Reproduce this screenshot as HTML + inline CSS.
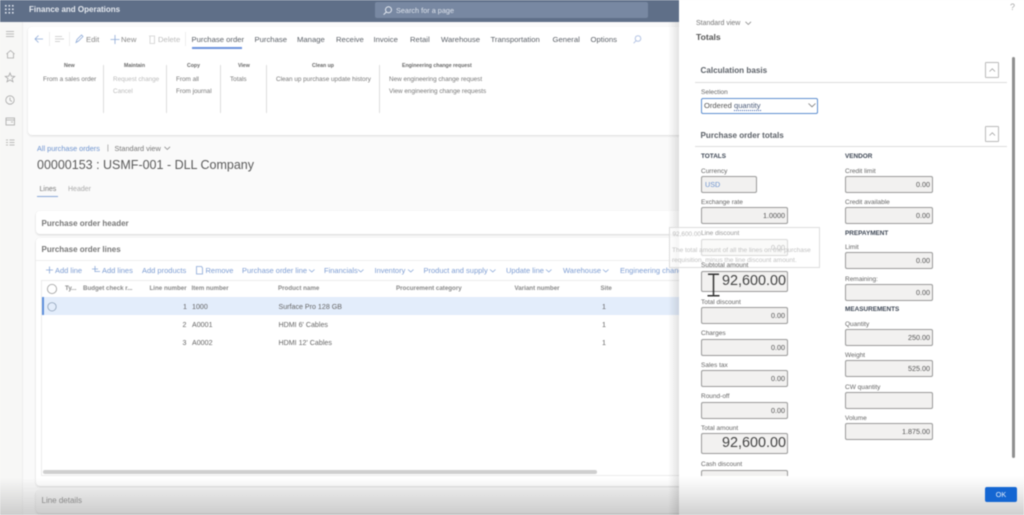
<!DOCTYPE html>
<html><head><meta charset="utf-8"><style>
html,body{margin:0;padding:0;width:1024px;height:515px;overflow:hidden;background:#fafafa;font-family:"Liberation Sans",sans-serif;color:#555}
#w{position:absolute;left:0;top:0;width:1024px;height:515px;overflow:hidden;filter:blur(.45px)}
.a{position:absolute}
.t{position:absolute;white-space:nowrap;line-height:10px;font-size:6.6px}
.tab{font-size:7.7px;top:35px;color:#5a5f66}
.bl{color:#6d93cf}
.rh{font-size:5.2px;font-weight:bold;color:#666;top:61px}
.ri{color:#777;font-size:6.35px}
.dis{color:#bbb}
.sep{position:absolute;width:1px;background:#ddd;top:65px;height:48px}
.th{font-size:6.2px;font-weight:bold;color:#888;top:284px}
.td{font-size:7.1px;color:#666}
.cmd{font-size:7.5px;color:#7d9dd3;top:266px}
.f{position:absolute;box-sizing:border-box;background:#f2f1f0;border:1px solid #9a9a9a;border-radius:2px;text-align:right;color:#555;font-size:7.2px;line-height:15px;padding-right:2px;height:17px;width:87px}
.c2{width:88px}
.l{position:absolute;white-space:nowrap;font-size:6.5px;color:#666;line-height:8px;margin-top:1px}
.big{font-size:14.4px;line-height:19px;height:21px;color:#444;padding-right:1px}
.h{position:absolute;font-size:6.4px;font-weight:bold;color:#3d4654;line-height:8px}
svg{position:absolute;overflow:visible}
</style></head><body><div id="w">

<!-- top bar -->
<div class="a" style="left:0;top:0;width:1024px;height:22px;background:#5f6f88"></div>
<svg style="left:5px;top:5px" width="10" height="10"><g fill="#dfe5ee"><rect x="0" y="0" width="1.6" height="1.6"/><rect x="3.5" y="0" width="1.6" height="1.6"/><rect x="7" y="0" width="1.6" height="1.6"/><rect x="0" y="3.5" width="1.6" height="1.6"/><rect x="3.5" y="3.5" width="1.6" height="1.6"/><rect x="7" y="3.5" width="1.6" height="1.6"/><rect x="0" y="7" width="1.6" height="1.6"/><rect x="3.5" y="7" width="1.6" height="1.6"/><rect x="7" y="7" width="1.6" height="1.6"/></g></svg>
<div class="t" style="left:29px;top:4.5px;font-size:8px;font-weight:bold;color:#e6eaf0">Finance and Operations</div>
<div class="a" style="left:375px;top:2px;width:273px;height:16px;background:#7888a2;border-radius:2px"></div>
<svg style="left:383px;top:6px" width="10" height="10" fill="none" stroke="#e4e9f1" stroke-width="1"><circle cx="5.5" cy="3.8" r="3"/><path d="M3.3 6L.6 8.7"/></svg>
<div class="t" style="left:396px;top:6px;font-size:7.3px;color:#dde3ec">Search for a page</div>

<!-- sidebar -->
<div class="a" style="left:0;top:22px;width:22px;height:493px;background:#f7f7f6;border-right:1px solid #eee"></div>
<svg style="left:5px;top:28px" width="14" height="130" fill="none" stroke="#a8a8a8" stroke-width=".8">
<path d="M1 3.5H9M1 6H9M1 8.5H9"/>
<path d="M1.500 26L5.500 22.500L9.500 26M2.500 25.500V30H8.500V25.500"/>
<path d="M5 45L6.300 48.200L9.700 48.400L7 50.500L8 53.800L5 52L2 53.800L3 50.500L.3 48.400L3.700 48.200Z"/>
<circle cx="5" cy="72" r="4.200"/><path d="M5 69.500V72.300L7 73.500"/>
<rect x="1" y="90" width="8.500" height="7"/><path d="M1 92H9.500M6 94H8"/>
<path d="M1 112H3M1 114.500H3M1 117H3M4.500 112H9.500M4.500 114.500H9.500M4.500 117H9.500"/></svg>

<!-- ribbon card -->
<div class="a" style="left:28px;top:27px;width:660px;height:108px;background:#fff;border-radius:4px;box-shadow:0 1px 2px rgba(0,0,0,.12)"></div>
<svg style="left:35px;top:34px" width="130" height="12" fill="none" stroke-width=".8">
<path d="M0 5H8M3.500 1.500L0 5L3.500 8.500" stroke="#8fabd8"/>
<path d="M20 2.500H27M20 5H29M20 7.500H25" stroke="#c4c4c4"/>
<path d="M41 8.500L42 5.500L46.500 1L48 2.500L43.500 7Z" stroke="#8fabd8"/>
<path d="M75.500 5.500H84.500M80 1V10" stroke="#8fabd8"/>
<path d="M114 2H120M115 2V9.500H119.500V2" stroke="#d0d0d0"/></svg>
<div class="a" style="left:49px;top:32px;width:1px;height:14px;background:#eee"></div>
<div class="a" style="left:69px;top:32px;width:1px;height:14px;background:#eee"></div>
<div class="a" style="left:185px;top:32px;width:1px;height:14px;background:#eee"></div>
<div class="t tab" style="left:86px;color:#888">Edit</div>
<div class="t tab" style="left:121px;color:#888">New</div>
<div class="t tab dis" style="left:158px">Delete</div>
<div class="t tab" style="left:191.500px">Purchase order</div>
<div class="a" style="left:192px;top:47px;width:50px;height:2px;background:#6d93dd"></div>
<div class="t tab" style="left:254.500px">Purchase</div>
<div class="t tab" style="left:297px">Manage</div>
<div class="t tab" style="left:336px">Receive</div>
<div class="t tab" style="left:373.500px">Invoice</div>
<div class="t tab" style="left:410px">Retail</div>
<div class="t tab" style="left:441px">Warehouse</div>
<div class="t tab" style="left:490.500px">Transportation</div>
<div class="t tab" style="left:552.500px">General</div>
<div class="t tab" style="left:590.500px">Options</div>
<svg style="left:633px;top:35px" width="9" height="9" fill="none" stroke="#b4c4e4"><circle cx="5" cy="3.500" r="2.800"/><path d="M3 5.800L.6 8.200"/></svg>

<div class="t rh" style="left:64px">New</div>
<div class="t rh" style="left:124px">Maintain</div>
<div class="t rh" style="left:187px">Copy</div>
<div class="t rh" style="left:238px">View</div>
<div class="t rh" style="left:312px">Clean up</div>
<div class="t rh" style="left:402px">Engineering change request</div>
<div class="sep" style="left:103px"></div><div class="sep" style="left:166px"></div><div class="sep" style="left:220px"></div><div class="sep" style="left:266px"></div><div class="sep" style="left:379px"></div>
<div class="t ri" style="left:43px;top:75px">From a sales order</div>
<div class="t ri dis" style="left:113px;top:75px">Request change</div>
<div class="t ri dis" style="left:113px;top:87px">Cancel</div>
<div class="t ri" style="left:176px;top:75px">From all</div>
<div class="t ri" style="left:176px;top:87px">From journal</div>
<div class="t ri" style="left:230px;top:75px">Totals</div>
<div class="t ri" style="left:276px;top:75px">Clean up purchase update history</div>
<div class="t ri" style="left:389px;top:75px">New engineering change request</div>
<div class="t ri" style="left:389px;top:87px">View engineering change requests</div>

<!-- page header -->
<div class="t bl" style="left:37px;top:143.500px;font-size:7.300px">All purchase orders</div>
<div class="t" style="left:107px;top:143.500px;font-size:7px;color:#888">|</div>
<div class="t" style="left:114.500px;top:143.500px;font-size:7.300px;color:#777">Standard view</div>
<svg style="left:164px;top:146px" width="7" height="5" fill="none" stroke="#888" stroke-width=".8"><path d="M.5 .8L3.300 3.500L6 .8"/></svg>
<div class="t" style="left:37px;top:158px;height:14px;line-height:14px;font-size:12.500px;color:#5a5a5a">00000153 : USMF-001 - DLL Company</div>
<div class="t" style="left:39.500px;top:185px;font-size:7px;color:#777">Lines</div>
<div class="t" style="left:68px;top:185px;font-size:7px;color:#aaa">Header</div>
<div class="a" style="left:37px;top:196px;width:21px;height:1px;background:#8aa8d8"></div>

<!-- cards -->
<div class="a" style="left:36px;top:211px;width:650px;height:23px;background:#fff;border-radius:4px;box-shadow:0 1px 2px rgba(0,0,0,.15)"></div>
<div class="t" style="left:41.500px;top:219px;font-size:8px;font-weight:bold;color:#777">Purchase order header</div>
<div class="a" style="left:36px;top:238px;width:650px;height:248px;background:#fff;border-radius:4px;box-shadow:0 1px 2px rgba(0,0,0,.15)"></div>
<div class="t" style="left:41.500px;top:245px;font-size:8px;font-weight:bold;color:#777">Purchase order lines</div>
<div class="a" style="left:36px;top:260px;width:650px;height:1px;background:#eee"></div>

<svg style="left:45px;top:265px" width="160" height="10" fill="none" stroke="#8aa8d8" stroke-width=".8"><path d="M1 5H8M4.500 1.500V8.500M47 4H53M50 1V7M50 6.500H55M151.500 1.500H156.500L157.500 3V9H151.500Z"/></svg>
<div class="t cmd" style="left:55px">Add line</div>
<div class="t cmd" style="left:102px">Add lines</div>
<div class="t cmd" style="left:142px">Add products</div>
<div class="t cmd" style="left:205.500px">Remove</div>
<div class="t cmd" style="left:242px">Purchase order line</div>
<div class="t cmd" style="left:324px">Financials</div>
<div class="t cmd" style="left:374.500px">Inventory</div>
<div class="t cmd" style="left:423.500px">Product and supply</div>
<div class="t cmd" style="left:506px">Update line</div>
<div class="t cmd" style="left:563px">Warehouse</div>
<div class="t cmd" style="left:620px">Engineering change</div>
<svg style="left:309px;top:269px" width="360" height="5" fill="none" stroke="#8aa8d8" stroke-width=".8"><path d="M0 .5L2.800 3L5.500 .5M49 .5L51.800 3L54.500 .5M99 .5L101.800 3L104.500 .5M181 .5L183.800 3L186.500 .5M237 .5L239.800 3L242.500 .5M294 .5L296.800 3L299.500 .5"/></svg>

<!-- table -->
<div class="a" style="left:41px;top:280px;width:640px;height:196px;box-sizing:border-box;border:1px solid #ececec;border-right:0"></div>
<div class="a" style="left:42px;top:297px;width:640px;height:18px;background:#e3edfb"></div>
<div class="a" style="left:42px;top:297px;width:1.500px;height:18px;background:#5d8fdc"></div>
<svg style="left:46px;top:283px" width="12" height="32" fill="none" stroke="#999" stroke-width=".8"><circle cx="6" cy="6" r="4.600"/><circle cx="6" cy="23.800" r="4.200" stroke="#8fa1b8"/></svg>
<div class="t th" style="left:65px">Ty...</div>
<div class="t th" style="left:83px">Budget check r...</div>
<div class="t th" style="left:149.500px">Line number</div>
<div class="t th" style="left:191.500px">Item number</div>
<div class="t th" style="left:278px">Product name</div>
<div class="t th" style="left:396px">Procurement category</div>
<div class="t th" style="left:514.500px">Variant number</div>
<div class="t th" style="left:600.500px">Site</div>

<div class="t td" style="left:183px;top:302px">1</div><div class="t td bl" style="left:192px;top:302px">1000</div><div class="t td" style="left:278.500px;top:302px">Surface Pro 128 GB</div><div class="t td" style="left:602px;top:302px">1</div>
<div class="t td" style="left:182.500px;top:320px">2</div><div class="t td" style="left:192px;top:320px">A0001</div><div class="t td" style="left:278.500px;top:320px">HDMI 6' Cables</div><div class="t td" style="left:602px;top:320px">1</div>
<div class="t td" style="left:182.500px;top:338px">3</div><div class="t td" style="left:192px;top:338px">A0002</div><div class="t td" style="left:278.500px;top:338px">HDMI 12' Cables</div><div class="t td" style="left:602px;top:338px">1</div>

<div class="a" style="left:43px;top:470px;width:554px;height:4px;background:#cfcfcf;border-radius:2px"></div>

<!-- line details + bottom fade -->
<div class="a" style="left:36px;top:490px;width:650px;height:23px;background:#f4f4f4;border-radius:4px;box-shadow:0 1px 2px rgba(0,0,0,.2)"></div>
<div class="t" style="left:41.500px;top:496px;font-size:8px;color:#777">Line details</div>
<div class="a" style="left:0;top:478px;width:680px;height:37px;background:linear-gradient(rgba(170,170,170,0),rgba(170,170,170,.55))"></div>

<!-- panel -->
<div class="a" style="left:668px;top:22px;width:12px;height:493px;background:linear-gradient(90deg,rgba(0,0,0,0),rgba(0,0,0,.12))"></div>
<div class="a" style="left:679px;top:0;width:345px;height:515px;background:#fff"></div>
<div class="t" style="left:1010px;top:2px;font-size:9px;color:#aaa">?</div>
<div class="t" style="left:696px;top:19px;font-size:7px;color:#777">Standard view</div>
<svg style="left:745px;top:21px" width="7" height="5" fill="none" stroke="#888" stroke-width=".8"><path d="M.5 .8L3.300 3.500L6 .8"/></svg>
<div class="t" style="left:696px;top:32px;font-size:8.600px;font-weight:bold;color:#555">Totals</div>

<div class="t" style="left:700.500px;top:66px;font-size:8.100px;font-weight:bold;color:#5c6168">Calculation basis</div>
<div class="a" style="left:695px;top:81.500px;width:312px;height:1px;background:#ddd"></div>
<div class="a" style="left:985px;top:62px;box-sizing:border-box;width:14px;height:16px;border:1px solid #bbb;border-radius:1px"></div>
<svg style="left:989px;top:68px" width="7" height="4" fill="none" stroke="#999" stroke-width=".7"><path d="M.5 3.500L3.300 .8L6 3.500"/></svg>
<div class="l" style="left:701px;top:87.500px">Selection</div>
<div class="a" style="left:701px;top:97.500px;width:117px;height:16px;box-sizing:border-box;border:1px solid #5f8fd0;border-radius:2px;background:#fff"></div>
<div class="t" style="left:704px;top:101px;font-size:7.600px;color:#555">Ordered <span style="border-bottom:1px dotted #3a5ea8;color:#4a5a78">quantity</span></div>
<svg style="left:808px;top:103px" width="9" height="5" fill="none" stroke="#777" stroke-width=".8"><path d="M.5 .5L4 3.800L7.500 .5"/></svg>

<div class="t" style="left:700.500px;top:131px;font-size:8.100px;font-weight:bold;color:#5c6168">Purchase order totals</div>
<div class="a" style="left:695px;top:146px;width:312px;height:1px;background:#ddd"></div>
<div class="a" style="left:985px;top:126px;box-sizing:border-box;width:14px;height:16px;border:1px solid #bbb;border-radius:1px"></div>
<svg style="left:989px;top:132px" width="7" height="4" fill="none" stroke="#999" stroke-width=".7"><path d="M.5 3.500L3.300 .8L6 3.500"/></svg>
<div class="a" style="left:1012px;top:57px;width:3px;height:401px;background:#8f8f8f;border-radius:2px"></div>

<div class="h" style="left:701px;top:152.500px">TOTALS</div>
<div class="l" style="left:701px;top:166.500px">Currency</div>
<div class="f" style="left:701px;top:176px;width:56px;text-align:left;padding-left:3px;color:#6d93cf">USD</div>
<div class="l" style="left:701px;top:198px">Exchange rate</div>
<div class="f" style="left:701px;top:207px">1.0000</div>
<div class="f" style="left:701px;top:239px">0.00</div>
<div class="f big" style="left:701px;top:271px">92,600.00</div>
<div class="l" style="left:701px;top:297.500px">Total discount</div>
<div class="f" style="left:701px;top:307px">0.00</div>
<div class="l" style="left:701px;top:328.500px">Charges</div>
<div class="f" style="left:701px;top:339px">0.00</div>
<div class="l" style="left:701px;top:361px">Sales tax</div>
<div class="f" style="left:701px;top:370px">0.00</div>
<div class="l" style="left:701px;top:392px">Round-off</div>
<div class="f" style="left:701px;top:402px">0.00</div>
<div class="l" style="left:701px;top:423.500px">Total amount</div>
<div class="f big" style="left:701px;top:433px">92,600.00</div>
<div class="l" style="left:701px;top:460px">Cash discount</div>
<div class="f" style="left:701px;top:470px"></div>

<div class="h" style="left:845px;top:152.500px">VENDOR</div>
<div class="l" style="left:845px;top:166.500px">Credit limit</div>
<div class="f c2" style="left:845px;top:176px">0.00</div>
<div class="l" style="left:845px;top:198px">Credit available</div>
<div class="f c2" style="left:845px;top:207px">0.00</div>
<div class="h" style="left:845px;top:229.500px">PREPAYMENT</div>
<div class="l" style="left:845px;top:243px">Limit</div>
<div class="f c2" style="left:845px;top:252px">0.00</div>
<div class="l" style="left:845px;top:274.500px">Remaining:</div>
<div class="f c2" style="left:845px;top:284px">0.00</div>
<div class="h" style="left:845px;top:306px">MEASUREMENTS</div>
<div class="l" style="left:845px;top:320px">Quantity</div>
<div class="f c2" style="left:845px;top:329px">250.00</div>
<div class="l" style="left:845px;top:351px">Weight</div>
<div class="f c2" style="left:845px;top:360px">525.00</div>
<div class="l" style="left:845px;top:383px">CW quantity</div>
<div class="f c2" style="left:845px;top:392px"></div>
<div class="l" style="left:845px;top:414px">Volume</div>
<div class="f c2" style="left:845px;top:423px">1.875.00</div>

<!-- tooltip -->
<div class="a" style="left:669px;top:227px;width:151px;height:41px;box-sizing:border-box;border:1px solid #ddd;background:rgba(255,255,255,.62)"></div>
<div class="t" style="left:672.500px;top:230px;font-size:6.400px;color:#bbb">92,600.00</div>
<div class="l" style="left:701px;top:229px;color:#999">Line discount</div>
<div class="t" style="left:672px;top:246px;font-size:6.500px;color:#c2c2c2">The total amount of all the lines on the purchase</div>
<div class="t" style="left:672px;top:256px;font-size:6.500px;color:#c2c2c2">requisition, minus the line discount amount.</div>
<div class="l" style="left:701px;top:261px">Subtotal amount</div>

<!-- I-beam cursor -->
<svg style="left:706px;top:273px" width="16" height="25" fill="none" stroke="#333" stroke-width="1.500"><path d="M2 1.200H13M7.500 1.200V22.800M1.500 22.800H13.500"/></svg>

<!-- footer -->
<div class="a" style="left:679px;top:476px;width:345px;height:39px;background:linear-gradient(#fff,#ececec 45%,#cfcfcf)"></div>
<div class="a" style="left:985px;top:487px;width:32px;height:15px;background:#1466d2;border-radius:2px;color:#e8f0fb;font-size:7.200px;line-height:15px;text-align:center">OK</div>
</div></body></html>
